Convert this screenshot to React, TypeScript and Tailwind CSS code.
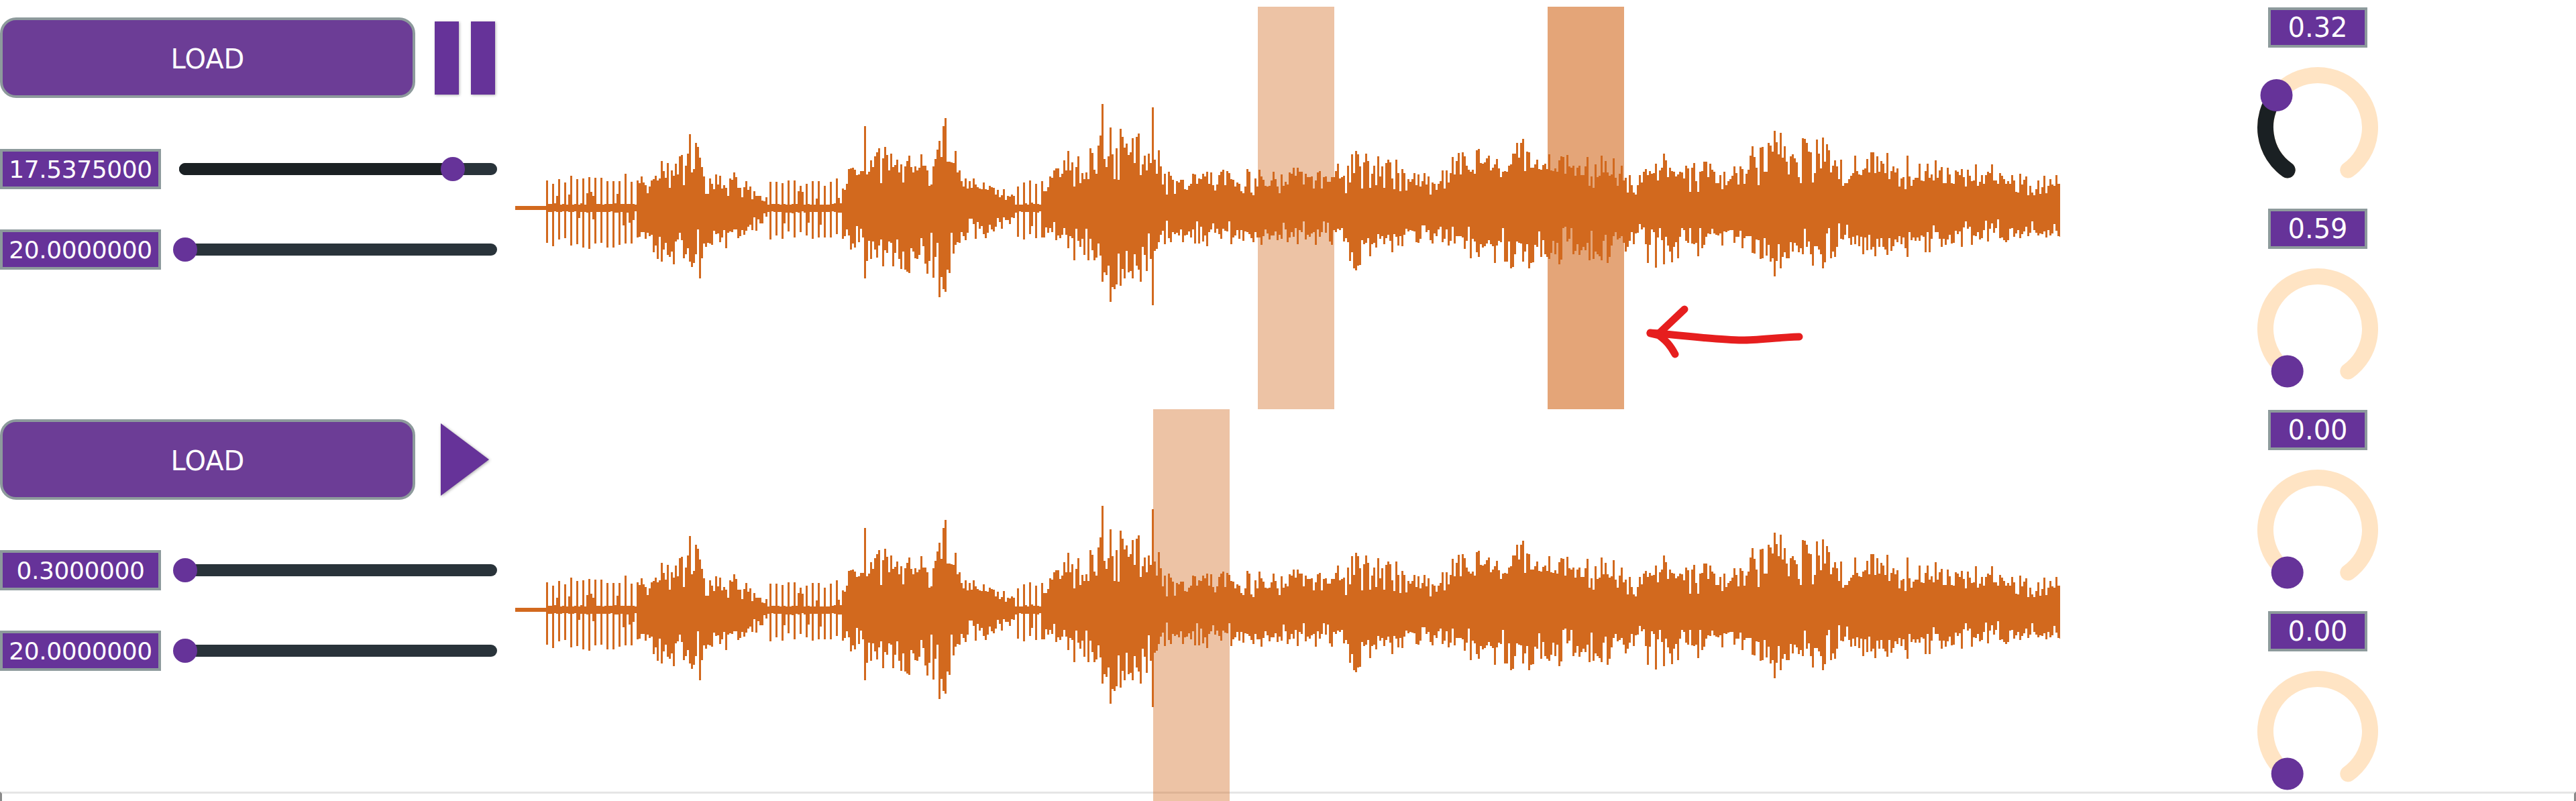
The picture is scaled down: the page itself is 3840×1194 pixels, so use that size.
import React from "react"

// x (page px), peak above centre, peak below centre
const envelope: [number, number, number][] = [
  [814, 50, 62], [950, 52, 62], [965, 48, 66], [990, 80, 85], [1015, 95, 85], [1040, 100, 95],
  [1050, 48, 60], [1090, 55, 62], [1125, 34, 40], [1140, 14, 16],
  [1145, 42, 50], [1250, 45, 52],
  [1256, 45, 50], [1275, 90, 80], [1330, 92, 90], [1380, 92, 105], [1405, 128, 128], [1425, 95, 105],
  [1430, 58, 48], [1470, 42, 48], [1505, 26, 28],
  [1512, 42, 55], [1552, 45, 55],
  [1556, 42, 48], [1590, 85, 75], [1630, 100, 95], [1650, 128, 128], [1700, 118, 110], [1722, 112, 105],
  [1730, 62, 60], [1900, 58, 54], [1990, 72, 60], [2004, 55, 50],
  [2008, 92, 94], [2040, 90, 82], [2110, 62, 60], [2155, 58, 54],
  [2165, 88, 74], [2230, 98, 88], [2290, 100, 94],
  [2300, 82, 84], [2400, 82, 88], [2450, 54, 50],
  [2456, 92, 96], [2500, 76, 80], [2590, 62, 58],
  [2600, 88, 74], [2650, 106, 92], [2720, 106, 92], [2750, 66, 62],
  [2760, 84, 68], [2825, 82, 78], [2900, 68, 60], [2950, 68, 56], [3071, 52, 44],
]

// hand read spikes that stick out of the envelope
const peaks: Record<number, [number, number]> = {
  1029: [110, 80], 1044: [75, 105], 1288: [122, 105], 1399: [100, 133], 1408: [134, 125],
  1642: [155, 110], 1654: [120, 140], 1717: [150, 145], 2020: [85, 93], 2269: [103, 80],
  2644: [115, 102], 2654: [112, 90], 2718: [105, 90],
}

const isSparse = (x: number) =>
  (x >= 814 && x < 951) || (x >= 1143 && x < 1254) || (x >= 1510 && x < 1554)

function sample(x: number, i: 1 | 2) {
  for (let k = 1; k < envelope.length; k++) {
    const a = envelope[k - 1]
    const b = envelope[k]
    if (x <= b[0]) return a[i] + ((b[i] - a[i]) * (x - a[0])) / (b[0] - a[0] || 1)
  }
  return 30
}

function buildWave() {
  let seed = 48271
  const rnd = () => {
    seed = (seed * 16807) % 2147483647
    return seed / 2147483647
  }
  let d = "M0 197h46v6h-46z"
  for (let x = 814; x < 3071; x += 3) {
    let up = 0
    let down = 0
    const envUp = sample(x, 1)
    const envDown = sample(x, 2)
    const peak = peaks[x - ((x - 814) % 3)] ?? peaks[x - ((x - 814) % 3) + 1] ?? peaks[x - ((x - 814) % 3) + 2]
    if (peak) {
      up = peak[0]
      down = peak[1]
    } else if (isSparse(x)) {
      if ((x - 814) % 9 === 0) {
        up = envUp * (0.72 + 0.28 * rnd())
        down = envDown * (0.7 + 0.3 * rnd())
      } else {
        up = 5 + (rnd() < 0.15 ? rnd() * 22 : rnd() * 2)
        down = 5 + (rnd() < 0.15 ? rnd() * 22 : rnd() * 2)
      }
    } else {
      const notchUp = rnd() < 0.15 ? 0.6 : 1
      const notchDown = rnd() < 0.15 ? 0.6 : 1
      up = envUp * notchUp * (0.54 + 0.46 * rnd() ** 1.4)
      down = envDown * notchDown * (0.54 + 0.46 * rnd() ** 1.4)
    }
    d += `M${x - 768} ${200 - Math.round(up)}h3v${Math.round(up) + Math.round(down)}h-3z`
  }
  return d
}

const wavePath = buildWave()

function Waveform() {
  return (
    <svg width="2303" height="400" viewBox="0 0 2303 400" shapeRendering="crispEdges" className="block">
      <path d={wavePath} fill="#d2691e" />
    </svg>
  )
}

function Slider({ label, thumb, filled }: { label: string; thumb: number; filled?: boolean }) {
  return (
    <div className="flex items-center">
      <div className="flex h-[60px] w-[240px] items-center justify-center border-[4px] border-[#8d9a9c] bg-[#663399] pt-[2px] text-[36px] tracking-[-0.4px] text-white">
        {label}
      </div>
      <div className="relative ml-[27px] h-[18px] w-[474px] rounded-[9px] bg-[#29333a]">
        {filled && <div className="absolute inset-y-0 left-0 rounded-l-[9px] bg-[#1a2023]" style={{ width: thumb }} />}
        <div
          className="absolute top-[-9px] h-[36px] w-[36px] rounded-full bg-[#663399]"
          style={{ left: thumb - 18 }}
        />
      </div>
    </div>
  )
}

function LoadButton() {
  return (
    <button className="h-[120px] w-[619px] rounded-[24px] border-[4px] border-[#8d9a9c] bg-[#6c3d96] pt-[3px] text-[40px] text-white">
      LOAD
    </button>
  )
}

const polar = (deg: number) => {
  const a = (deg * Math.PI) / 180
  return [90 + 78 * Math.sin(a), 90 - 78 * Math.cos(a)]
}

function arc(from: number, to: number) {
  const [x1, y1] = polar(from)
  const [x2, y2] = polar(to)
  return `M${x1} ${y1}A78 78 0 ${to - from > 180 ? 1 : 0} 1 ${x2} ${y2}`
}

function Knob({ label, value }: { label: string; value: number }) {
  const angle = -144.5 + 289 * value
  const [tx, ty] = polar(angle)
  return (
    <div className="flex flex-col items-center">
      <div className="flex h-[60px] w-[148px] items-center justify-center border-[4px] border-[#8d9a9c] bg-[#663399] text-[40px] text-white">
        {label}
      </div>
      <svg width="180" height="180" viewBox="0 0 180 180" className="mt-[29px] overflow-visible">
        <path d={arc(-144.5, 144.5)} fill="none" stroke="#ffe4c4" strokeWidth="24" strokeLinecap="round" />
        {value > 0 && <path d={arc(-144.5, angle)} fill="none" stroke="#1a2023" strokeWidth="24" strokeLinecap="round" />}
        <circle cx={tx} cy={ty} r="24" fill="#663399" />
      </svg>
    </div>
  )
}

function Band({ className }: { className: string }) {
  return <div className={`absolute w-[114px] bg-[#d2691e] ${className}`} />
}

export default function App() {
  return (
    <div className="flex h-[1194px] w-[3840px] flex-col overflow-hidden bg-white font-['DejaVu_Sans',sans-serif]">
      <div className="flex h-[1180px]">
        <div className="flex w-[3366px] flex-col">
          {/* Deck 1 */}
          <div className="flex h-[610px]">
            <div className="flex w-[741px] flex-col pt-[26px]">
              <div className="flex items-center">
                <LoadButton />
                <div className="ml-[29px] flex gap-[18px]">
                  <div className="h-[109px] w-[36px] bg-[#663399] shadow-[1px_1px_4px_rgba(0,0,0,0.3)]" />
                  <div className="h-[109px] w-[36px] bg-[#663399] shadow-[1px_1px_4px_rgba(0,0,0,0.3)]" />
                </div>
              </div>
              <div className="mt-[76px] flex flex-col gap-[60px]">
                <Slider label="17.5375000" thumb={408} filled />
                <Slider label="20.0000000" thumb={9} />
              </div>
            </div>
            <div className="relative ml-[27px] flex-1 pt-[110px]">
              <Waveform />
              <Band className="left-[1107px] top-[10px] h-[600px] opacity-40" />
              <Band className="left-[1539px] top-[10px] h-[600px] opacity-60" />
              {/* red arrow scribbled over the screenshot */}
              <svg
                width="260"
                height="100"
                viewBox="2440 450 260 100"
                className="absolute left-[1672px] top-[450px]"
                fill="none"
                stroke="#e61e1e"
                strokeWidth="11"
                strokeLinecap="round"
                strokeLinejoin="round"
              >
                <path d="M2682 502C2650 503 2620 507 2597 507C2560 507 2510 500 2460 496" />
                <path d="M2511 461L2473 497" />
                <path d="M2497 528C2490 515 2484 508 2473 500L2460 497" />
              </svg>
            </div>
          </div>
          {/* Deck 2 */}
          <div className="flex h-[570px]">
            <div className="flex w-[741px] flex-col pt-[15px]">
              <div className="flex items-center">
                <LoadButton />
                <svg width="72" height="108" viewBox="0 0 72 108" className="ml-[38px] drop-shadow-[1px_1px_2px_rgba(0,0,0,0.35)]">
                  <path d="M0 0L72 54L0 108z" fill="#663399" />
                </svg>
              </div>
              <div className="mt-[75px] flex flex-col gap-[60px]">
                <Slider label="0.3000000" thumb={9} />
                <Slider label="20.0000000" thumb={9} />
              </div>
            </div>
            <div className="relative ml-[27px] flex-1 pt-[99px]">
              <Waveform />
              <Band className="left-[951px] top-0 h-[584px] opacity-40" />
            </div>
          </div>
        </div>
        <div className="-ml-[1px] flex w-[180px] flex-col gap-[31px] pt-[11px]">
          <Knob label="0.32" value={0.32} />
          <Knob label="0.59" value={0} />
          <Knob label="0.00" value={0} />
          <Knob label="0.00" value={0} />
        </div>
      </div>
      <div className="flex-1 border-x-[3px] border-t-[3px] border-x-[#8a8a8a] border-t-[#e5e5e5]" />
    </div>
  )
}
